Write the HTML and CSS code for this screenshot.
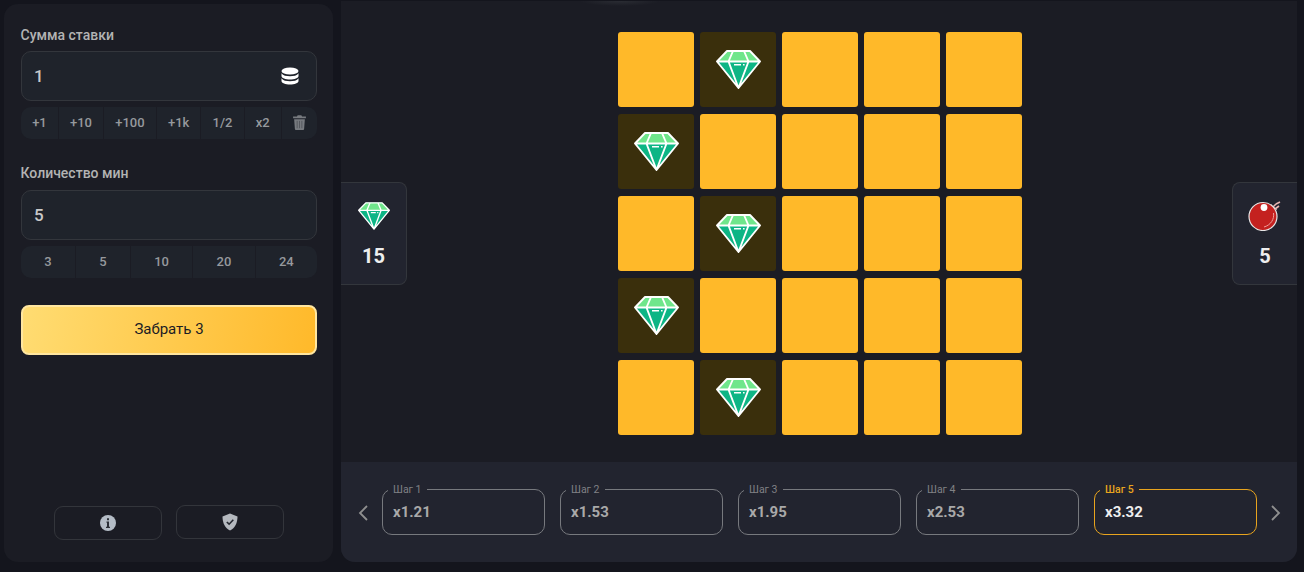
FILE: index.html
```html
<!DOCTYPE html>
<html lang="ru">

<head>
    <meta charset="UTF-8" />
    <meta name="viewport" content="width=device-width, initial-scale=1.0" />
    <title>Mines</title>
    <link rel="stylesheet" href="styles.css">
</head>

<body>
    <svg class="defs" width="0" height="0">
        <symbol id="gem" viewBox="0 0 45 39">
            <path d="M11 1H34L44 11.5 22.5 38 1 11.5Z" fill="#0db585" />
            <path d="M11 1H34L44 11.5H1Z" fill="#6fe68b" />
            <path d="M11 1H34L44 11.5 22.5 38 1 11.5Z M1 11.5H44 M17 1 12.5 11.5 22.5 38 32.5 11.5 28 1" fill="none" stroke="#fff" stroke-width="1.9" stroke-linejoin="round" />
            <path d="M18 14H25V15.6H18Z M27 14H28.6V15.6H27Z" fill="#fff" />
        </symbol>
    </svg>

    <div class="app">
        <!-- Bet panel -->
        <aside class="panel">
            <div class="field-label">Сумма ставки</div>
            <div class="input-box">
                <span>1</span>
                <svg class="coins" viewBox="0 0 18 18" width="18" height="18">
                    <ellipse cx="9" cy="4" rx="8.5" ry="3.6" fill="#fff" />
                    <path d="M.5 6.2C2 8.6 5.500 9.200 9 9.200S16 8.600 17.500 6.200V9C17.500 11 13.500 12.500 9 12.500S.5 11 .5 9Z" fill="#fff" />
                    <path d="M.5 11.200C2 13.600 5.500 14.200 9 14.200S16 13.600 17.500 11.200V14C17.500 16 13.500 17.500 9 17.500S.5 16 .5 14Z" fill="#fff" />
                </svg>
            </div>
            <div class="quick-row bet-row">
                <button class="quick-btn">+1</button>
                <button class="quick-btn">+10</button>
                <button class="quick-btn">+100</button>
                <button class="quick-btn">+1k</button>
                <button class="quick-btn">1/2</button>
                <button class="quick-btn">x2</button>
                <button class="quick-btn">
                    <svg viewBox="0 0 12 14" width="13" height="15">
                        <path d="M0 1.500H3.600L4.300.3H7.700L8.400 1.500H12V3H0Z M1 4H11L10.300 13A1 1 0 0 1 9.300 14H2.700A1 1 0 0 1 1.700 13Z" fill="#777a7f" />
                        <path d="M3.800 5.500V12.300 M6 5.500V12.300 M8.200 5.500V12.300" stroke="#44474c" stroke-width=".6" />
                    </svg>
                </button>
            </div>

            <div class="field-label second">Количество мин</div>
            <div class="input-box"><span>5</span></div>
            <div class="quick-row mines-row">
                <button class="quick-btn">3</button>
                <button class="quick-btn">5</button>
                <button class="quick-btn">10</button>
                <button class="quick-btn">20</button>
                <button class="quick-btn">24</button>
            </div>

            <button class="take-btn">Забрать 3</button>

            <div class="panel-foot">
                <button class="foot-btn info-btn">
                    <svg viewBox="0 0 16 16" width="16" height="16">
                        <circle cx="8" cy="8" r="8" fill="#b4bcc6" />
                        <path d="M7 3.200H9V5.200H7Z M6.500 6.500H9V11.800H10V13H6V11.800H7V7.700H6.500Z" fill="#2a2e36" />
                    </svg>
                </button>
                <button class="foot-btn shield-btn">
                    <svg viewBox="0 0 16 18" width="16" height="18">
                        <path d="M8 .5 15.500 3.500C15.500 10 13 15 8 17.500 3 15 .5 10 .5 3.500Z" fill="#b4b8be" />
                        <path d="M4.800 9 7.100 11.200 11.300 6.800" fill="none" stroke="#23262e" stroke-width="1.600" />
                    </svg>
                </button>
            </div>
        </aside>

        <main class="game">
            <div class="board">
                <div class="stat stat-left">
                    <svg class="stat-icon" width="32" height="28"><use href="#gem" /></svg>
                    <div class="stat-num">15</div>
                </div>

                <div class="grid">
                    <div class="cell"></div>
                    <div class="cell open"><svg width="45" height="39"><use href="#gem" /></svg></div>
                    <div class="cell"></div>
                    <div class="cell"></div>
                    <div class="cell"></div>

                    <div class="cell open"><svg width="45" height="39"><use href="#gem" /></svg></div>
                    <div class="cell"></div>
                    <div class="cell"></div>
                    <div class="cell"></div>
                    <div class="cell"></div>

                    <div class="cell"></div>
                    <div class="cell open"><svg width="45" height="39"><use href="#gem" /></svg></div>
                    <div class="cell"></div>
                    <div class="cell"></div>
                    <div class="cell"></div>

                    <div class="cell open"><svg width="45" height="39"><use href="#gem" /></svg></div>
                    <div class="cell"></div>
                    <div class="cell"></div>
                    <div class="cell"></div>
                    <div class="cell"></div>

                    <div class="cell"></div>
                    <div class="cell open"><svg width="45" height="39"><use href="#gem" /></svg></div>
                    <div class="cell"></div>
                    <div class="cell"></div>
                    <div class="cell"></div>
                </div>

                <div class="stat stat-right">
                    <svg class="stat-icon" viewBox="0 0 34 30" width="34" height="30">
                        <path d="M25 6 28 3 M27 8 31 5 M28 3 32 1" stroke="#e9b5b0" stroke-width="1.600" fill="none" />
                        <path d="M23 3.500 28.500 8.500 26 11 21 6Z" fill="#c4211f" stroke="#ddd" stroke-width=".8" />
                        <circle cx="15" cy="15.500" r="14" fill="#c4211f" stroke="#e6e6e6" stroke-width="1.200" />
                        <path d="M25.500 12C26.500 18 23 24 16 26" fill="none" stroke="#f0a09a" stroke-width="1" />
                        <circle cx="16" cy="6.500" r="3.400" fill="#fff" />
                    </svg>
                    <div class="stat-num">5</div>
                </div>
            </div>

            <!-- Multiplier steps -->
            <div class="steps">
                <svg class="arrow" viewBox="0 0 10 16" width="10" height="16">
                    <path d="M9 1 2 8 9 15" fill="none" stroke="#8f8f8f" stroke-width="1.800" />
                </svg>
                <fieldset class="step"><legend>Шаг 1</legend>x1.21</fieldset>
                <fieldset class="step"><legend>Шаг 2</legend>x1.53</fieldset>
                <fieldset class="step"><legend>Шаг 3</legend>x1.95</fieldset>
                <fieldset class="step"><legend>Шаг 4</legend>x2.53</fieldset>
                <fieldset class="step active"><legend>Шаг 5</legend>x3.32</fieldset>
                <svg class="arrow" viewBox="0 0 10 16" width="10" height="16">
                    <path d="M1 1 8 8 1 15" fill="none" stroke="#8f8f8f" stroke-width="1.800" />
                </svg>
            </div>
        </main>
    </div>
</body>

</html>
```

FILE: styles.css
```css
body {
    font-family: Roboto, "Liberation Sans", sans-serif;
    background: #14151d;
    margin: 0;
    padding: 0;
    height: 572px;
    overflow: hidden;
    color: #b5b5b5;
}

button {
    font-family: inherit;
    border: none;
    cursor: pointer;
}

.defs {
    display: block;
}

.app {
    display: flex;
    gap: 8px;
    height: 572px;
    box-sizing: border-box;
    padding: 1px 7px 10px 4px;
}

/* Bet panel */

.panel {
    width: 329px;
    margin-top: 3px;
    padding: 23px 16px 22px 17px;
    box-sizing: border-box;
    display: flex;
    flex-direction: column;
    background: #1b1c24;
    border-radius: 14px;
}

.field-label {
    font-size: 14px;
    font-weight: 500;
    line-height: 16px;
    margin-bottom: 8px;
    margin-left: -0.5px;
    color: #b3b3b3;
}

.field-label.second {
    margin-top: 26px;
    margin-bottom: 9px;
}

.input-box {
    height: 50px;
    box-sizing: border-box;
    display: flex;
    align-items: center;
    justify-content: space-between;
    padding: 0 17px 0 12px;
    background: #1f232b;
    border: 1px solid #33363c;
    border-radius: 10px;
    font-size: 17px;
    font-weight: 500;
    color: #c9c9c9;
}

.quick-row {
    display: flex;
    gap: 1px;
    height: 32px;
    margin-top: 6px;
    border-radius: 10px;
    overflow: hidden;
}

.quick-btn {
    flex-grow: 1;
    display: flex;
    align-items: center;
    justify-content: center;
    background: #1f232b;
    color: #96999d;
    font-size: 13px;
    font-weight: 500;
    padding: 0 11px 2px;
}

.mines-row .quick-btn {
    padding: 0 23px 2px;
}

.take-btn {
    height: 50px;
    margin-top: 27px;
    padding: 0 0 2px;
    background: linear-gradient(100deg, #ffdc72 0%, #ffb92a 100%);
    border: 2px solid #ffe6a0;
    border-radius: 8px;
    font-size: 15px;
    font-weight: 400;
    color: #1b1c24;
}

.panel-foot {
    margin-top: auto;
    display: flex;
    justify-content: center;
    align-items: flex-end;
    gap: 14px;
}

.foot-btn {
    width: 108px;
    height: 34px;
    display: flex;
    align-items: center;
    justify-content: center;
    background: transparent;
    border: 1px solid #33353b;
    border-radius: 9px;
}

.shield-btn {
    margin-bottom: 1px;
}

/* Game area */

.game {
    flex-grow: 1;
    display: flex;
    flex-direction: column;
    background: radial-gradient(ellipse 40px 5px at 279px 0, #2a2c33, transparent), #1b1c24;
    border-radius: 0 0 14px 14px;
    overflow: hidden;
}

.board {
    flex-grow: 1;
    display: flex;
    align-items: center;
    justify-content: space-between;
    padding: 31px 0 27px;
}

.grid {
    display: grid;
    grid-template-columns: repeat(5, 76px);
    grid-auto-rows: 75px;
    gap: 7px 6px;
    margin-left: 1px;
}

.cell {
    background: #ffb929;
    border-radius: 3px;
    display: flex;
    align-items: center;
    justify-content: center;
}

.cell.open {
    background: #3a2f0c;
}

.stat {
    height: 103px;
    box-sizing: border-box;
    display: flex;
    flex-direction: column;
    align-items: center;
    background: #22242f;
    border: 1px solid #33363c;
}

.stat-left {
    width: 66px;
    border-left: none;
    border-radius: 0 8px 8px 0;
}

.stat-right {
    width: 65px;
    border-right: none;
    border-radius: 8px 0 0 8px;
}

.stat-icon {
    margin-top: 18px;
}

.stat-left .stat-icon {
    margin-top: 19px;
}

.stat-num {
    margin-top: 14px;
    font-size: 20px;
    font-weight: 700;
    line-height: 24px;
    color: #eeeeee;
}

.stat-right .stat-num {
    margin-top: 13px;
}

/* Steps */

.steps {
    height: 100px;
    flex-shrink: 0;
    box-sizing: border-box;
    display: flex;
    align-items: flex-end;
    gap: 15px;
    padding: 0 16px 27px 17px;
    background: #22242f;
}

.arrow {
    flex-shrink: 0;
    margin-bottom: 14px;
}

.arrow:first-child {
    margin-right: -1px;
}

.arrow:last-child {
    margin-left: -1px;
}

.step {
    flex: 1 1 0;
    min-width: 0;
    margin: 0;
    height: 52px;
    box-sizing: border-box;
    padding: 0 0 0 10px;
    border: 1px solid #77797e;
    border-radius: 10px;
    font-size: 15px;
    font-weight: 700;
    line-height: 33px;
    color: #a9a9a9;
}

.step legend {
    margin-left: -5px;
    padding: 1px 5px 0;
    font-size: 10.5px;
    font-weight: 400;
    line-height: 12px;
    color: #808185;
}

.step.active {
    border-color: #e8a41e;
    color: #eeeeee;
}

.step.active legend {
    color: #e8a41e;
    font-weight: 500;
}
```
